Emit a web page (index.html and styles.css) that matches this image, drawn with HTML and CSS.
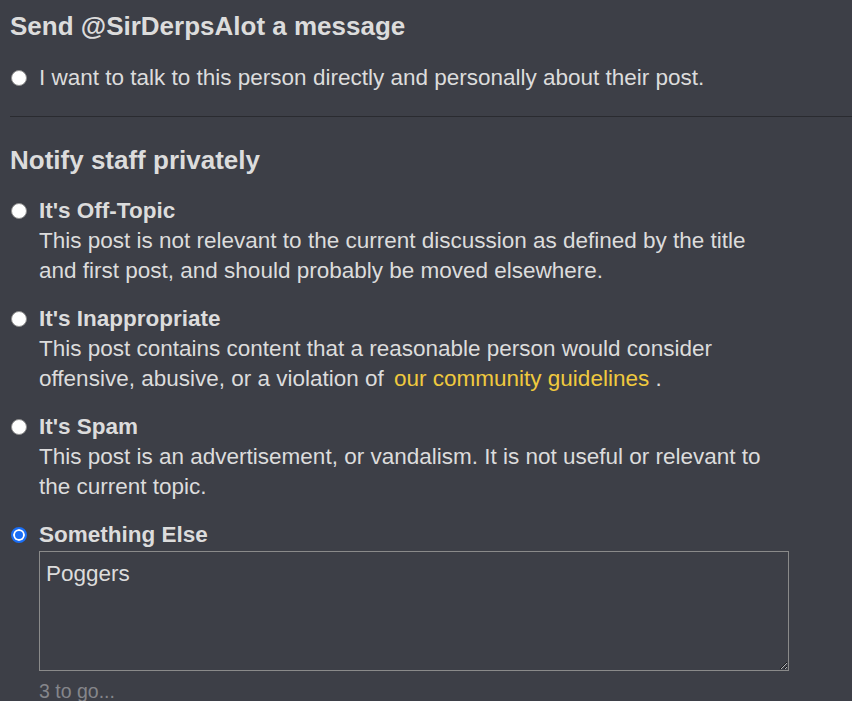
FILE: index.html
```html
<!DOCTYPE html>
<html>
<head>
<meta charset="utf-8">
<link rel="stylesheet" href="styles.css">
</head>
<body>
<div class="modal">
  <section class="section">
    <h2 class="heading">Send @SirDerpsAlot a message</h2>
    <label class="option">
      <span class="radio"></span>
      <span class="option-body">
        <span class="plain">I want to talk to this person directly and personally about their post.</span>
      </span>
    </label>
  </section>
  <hr class="sep">
  <section class="section">
    <h2 class="heading heading-2">Notify staff privately</h2>
    <div class="options">
      <label class="option">
        <span class="radio"></span>
        <span class="option-body">
          <span class="title">It's Off-Topic</span>
          <span class="desc">This post is not relevant to the current discussion as defined by the title and first post, and should probably be moved elsewhere.</span>
        </span>
      </label>
      <label class="option">
        <span class="radio"></span>
        <span class="option-body">
          <span class="title">It's Inappropriate</span>
          <span class="desc">This post contains content that a reasonable person would consider offensive, abusive, or a violation of <a class="link">our community guidelines</a> .</span>
        </span>
      </label>
      <label class="option">
        <span class="radio"></span>
        <span class="option-body">
          <span class="title">It's Spam</span>
          <span class="desc">This post is an advertisement, or vandalism. It is not useful or relevant to the current topic.</span>
        </span>
      </label>
      <label class="option">
        <span class="radio checked"></span>
        <span class="option-body">
          <span class="title">Something Else</span>
          <textarea class="message">Poggers</textarea>
          <span class="counter">3 to go...</span>
        </span>
      </label>
    </div>
  </section>
</div>
</body>
</html>
```

FILE: styles.css
```css
html, body {
  margin: 0;
  padding: 0;
  background: #3d3f47;
}
body {
  font-family: "Liberation Sans", Arial, sans-serif;
  color: #dcdcdc;
  font-size: 22.5px;
  line-height: 30px;
}
.modal {
  padding: 11px 0 0 10px;
}
.section {
  display: flex;
  flex-direction: column;
}
.heading {
  margin: 0 0 22px 0;
  font-size: 26px;
  line-height: 30px;
  font-weight: bold;
  color: #dcdcdc;
}
.heading-2 {
  margin-bottom: 21px;
}
.sep {
  margin: 23px 0 28px 0;
  border: none;
  border-top: 1px solid #2a2b30;
  height: 0;
}
.options {
  display: flex;
  flex-direction: column;
  gap: 18px;
}
.option {
  display: flex;
  align-items: flex-start;
}
.radio {
  flex: none;
  width: 16px;
  height: 16px;
  box-sizing: border-box;
  border-radius: 50%;
  background: #ffffff;
  border: 1px solid #8f8f8f;
  margin: 7px 12px 0 1px;
}
.radio.checked {
  background: #1a6ef5;
  border: 2px solid #1a6ef5;
  box-shadow: inset 0 0 0 2px #ffffff;
}
.option-body {
  display: flex;
  flex-direction: column;
}
.title {
  font-weight: bold;
}
.desc {
  max-width: 740px;
}
.link {
  color: #f0c93e;
  margin-left: 4px;
}
.message {
  margin-top: 1px;
  width: 750px;
  height: 120px;
  box-sizing: border-box;
  background: #3d3f47;
  border: 1px solid #8a8a8a;
  color: #dcdcdc;
  font-family: "Liberation Sans", Arial, sans-serif;
  font-size: 22.5px;
  line-height: 26px;
  padding: 9px 6px;
  resize: vertical;
}
.counter {
  margin-top: 5px;
  color: #85868b;
  font-size: 19.5px;
}
```
